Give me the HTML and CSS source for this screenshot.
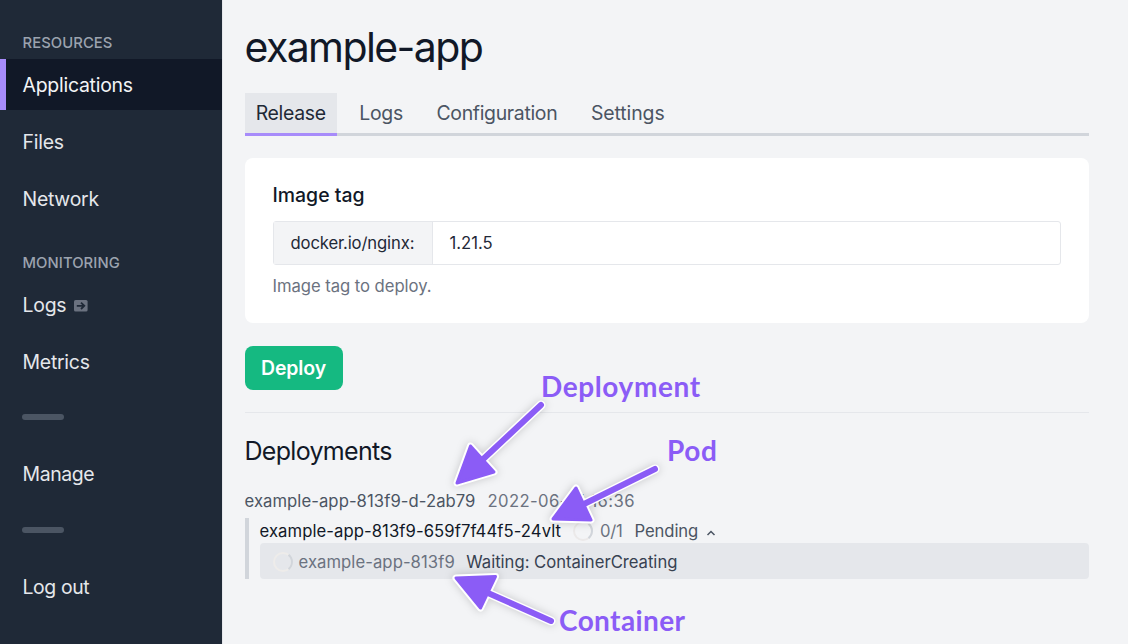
FILE: index.html
```html
<!DOCTYPE html>
<html lang="en">
<head>
<meta charset="utf-8">
<title>example-app</title>
<link rel="stylesheet" href="styles.css">
</head>
<body>
<div class="layout">
  <nav class="sidebar">
    <div class="nav-heading">RESOURCES</div>
    <a class="nav-item active">Applications</a>
    <a class="nav-item">Files</a>
    <a class="nav-item">Network</a>
    <div class="nav-heading second">MONITORING</div>
    <a class="nav-item">Logs
      <svg class="ext" viewBox="0 0 14 12"><rect x="0" y="0" width="13.6" height="11.6" rx="1.6" fill="#6b7280"/><path d="M2.8 5.8H10M7 2.6l3.3 3.2L7 9" fill="none" stroke="#1f2937" stroke-width="1.8"/></svg>
    </a>
    <a class="nav-item">Metrics</a>
    <div class="divider"></div>
    <a class="nav-item low">Manage</a>
    <div class="divider"></div>
    <a class="nav-item low">Log out</a>
  </nav>
  <main class="main">
    <h1 class="title">example-app</h1>
    <div class="tabs">
      <a class="tab selected">Release</a>
      <a class="tab">Logs</a>
      <a class="tab">Configuration</a>
      <a class="tab last">Settings</a>
    </div>
    <section class="card">
      <label class="label">Image tag</label>
      <div class="field">
        <span class="prefix">docker.io/nginx:</span>
        <span class="value">1.21.5</span>
      </div>
      <p class="hint">Image tag to deploy.</p>
    </section>
    <button class="deploy">Deploy</button>
    <h2 class="subtitle">Deployments</h2>
    <div class="deployment"><span class="dep-name">example-app-813f9-d-2ab79</span><span class="date">2022-06-15 16:36</span></div>
    <div class="pods">
      <div class="pod">
        <span class="pod-name">example-app-813f9-659f7f44f5-24vlt</span>
        <svg class="spinner" viewBox="0 0 20 20"><circle class="ring" cx="10" cy="10" r="9"/><path class="arc" d="M15.500 2.900A9 9 0 0 1 15.500 17.100"/></svg>
        <span class="count">0/1</span>
        <span class="pending">Pending</span>
        <svg class="chevron" viewBox="0 0 10 8"><path d="M1.500 6L5 2.500L8.500 6" fill="none" stroke="#4b5563" stroke-width="1.5"/></svg>
      </div>
      <div class="container-row">
        <svg class="spinner" viewBox="0 0 20 20"><circle class="ring" cx="10" cy="10" r="9"/><path class="arc" d="M15.500 2.900A9 9 0 0 1 15.500 17.100"/></svg>
        <span class="container-name">example-app-813f9</span>
        <span class="waiting">Waiting: ContainerCreating</span>
      </div>
    </div>
  </main>
</div>
<svg class="arrows" viewBox="0 0 1128 644">
  <defs>
    <g id="shapes">
      <path d="M541 405L479 463"/><path class="head" d="M457 483L470.500 446L494 472Z"/>
      <path d="M655 469L582 505"/><path class="head" d="M553 519L576 488L591 520Z"/>
      <path d="M551 621L488 593"/><path class="head" d="M456 578L495.500 576.500L480.500 608Z"/>
    </g>
  </defs>
  <use href="#shapes" class="outline"/>
  <use href="#shapes" class="fill"/>
</svg>
<div class="note note-deployment">Deployment</div>
<div class="note note-pod">Pod</div>
<div class="note note-container">Container</div>
</body>
</html>
```
FILE: styles.css
```css
* { box-sizing: border-box; }
body { margin: 0; width: 1128px; height: 644px; overflow: hidden; position: relative; background: #f3f4f6; color: #111827; font-family: Inter, sans-serif; font-size: 16.67px; }
.layout { display: flex; height: 644px; }
.sidebar { width: 222px; flex: none; background: #1f2937; padding-top: 31px; display: flex; flex-direction: column; }
.nav-heading { height: 24px; margin-bottom: 4px; padding-left: 22.500px; line-height: 24px; font-size: 14.8px; font-weight: 500; letter-spacing: 0.08px; color: #9ca3af; }
.nav-heading.second { margin-top: 21px; }
.nav-item { height: 51px; margin-bottom: 6px; padding: 0 0 0 22.500px; display: flex; align-items: center; font-size: 19.44px; color: #e5e7eb; letter-spacing: -0.25px; }
.nav-item.low { padding-bottom: 1px; letter-spacing: -0.4px; }
.nav-item.active { background: #111827; border-left: 6px solid #a78bfa; padding-left: 16.500px; color: #f3f4f6; }
.ext { width: 14px; height: 12px; margin-left: 8px; margin-top: 3px; }
.divider { width: 42px; height: 6px; margin: 21px 0 29px 22px; border-radius: 3px; background: #4b5563; }
.main { flex: 1; border-left: 1px solid #e5e7eb; padding: 17px 39px 0 21.500px; }
.title { margin: 0; height: 60px; line-height: 60px; font-size: 41px; font-weight: 400; letter-spacing: -1.6px; }
.tabs { display: flex; margin-top: 16px; height: 43px; box-shadow: inset 0 -3px #d1d5db; }
.tab { padding: 0 11.200px; margin-right: 11.200px; line-height: 40px; font-size: 19.44px; color: #4b5563; letter-spacing: -0.32px; }
.tab.last { letter-spacing: -0.1px; }
.tab.selected { background: #e5e7eb; color: #1f2937; border-bottom: 3px solid #a78bfa; }
.card { margin-top: 22px; height: 165px; border-radius: 8px; background: #fff; padding: 24px 28px; }
.label { display: block; height: 27px; line-height: 27px; font-size: 19.44px; font-weight: 500; letter-spacing: 0; }
.field { display: flex; height: 44px; margin-top: 12px; line-height: 43px; border: 1.400px solid #e5e7eb; border-radius: 3px; color: #1f2937; letter-spacing: -0.14px; }
.prefix { width: 159px; padding-left: 17px; background: #f3f4f6; border-right: 1.400px solid #e5e7eb; }
.value { padding-left: 17px; letter-spacing: 0; }
.hint { margin: 9px 0 0; line-height: 25px; color: #6b7280; letter-spacing: -0.05px; }
.deploy { display: block; margin-top: 23px; width: 98px; height: 44px; padding: 0; border: 0; border-radius: 8px; background: #15b981; color: #fff; font: 600 19.44px Inter, sans-serif; letter-spacing: -0.1px; }
.subtitle { margin: 22px 0 0; padding-top: 22px; height: 74px; border-top: 1px solid #e5e7eb; line-height: 33px; font-size: 25px; font-weight: 400; letter-spacing: -0.7px; }
.deployment { display: flex; height: 28px; line-height: 30px; color: #4b5563; letter-spacing: 0.06px; }
.date { margin-left: 12px; color: #6b7280; letter-spacing: 0.38px; }
.pods { margin-top: 4px; border-left: 4px solid #d1d5db; padding-left: 11px; height: 61px; }
.pod { display: flex; align-items: center; height: 25px; white-space: nowrap; padding-top: 1px; }
.pod-name { letter-spacing: 0.07px; }
.spinner { flex: none; width: 20px; height: 20px; fill: none; stroke-width: 2px; }
.ring { stroke: #ebe9e9; }
.arc { stroke: #d1d5db; }
.pod .spinner { margin-left: 12px; }
.count { margin-left: 7px; color: #6b7280; letter-spacing: -0.3px; }
.pending { margin-left: 12px; color: #4b5563; letter-spacing: -0.08px; }
.chevron { width: 10px; height: 8px; margin-left: 8px; margin-top: 3px; }
.container-row { display: flex; align-items: center; height: 36px; padding: 1px 0 0 13px; border-radius: 4px; background: #e5e7eb; white-space: nowrap; }
.container-row .ring { stroke: #eeecea; }
.container-name { margin-left: 6px; color: #6b7280; letter-spacing: 0.06px; }
.waiting { margin-left: 11.500px; color: #374151; letter-spacing: -0.02px; }
.arrows { position: absolute; left: 0; top: 0; width: 1128px; height: 644px; filter: drop-shadow(0 0 4px rgba(0,0,0,.18)); }
.arrows path { stroke-linecap: round; stroke-linejoin: round; }
.outline { stroke: #fff; fill: #fff; stroke-width: 9px; --head-stroke: 7px; }
.fill { stroke: #8b5cf6; fill: #8b5cf6; stroke-width: 6px; --head-stroke: 3px; }
.head { stroke-width: var(--head-stroke); }
.note { position: absolute; color: #8b5cf6; font: 700 28px/34px Lato, sans-serif; letter-spacing: 0.6px; }
.note-deployment { left: 541px; top: 369px; }
.note-pod { left: 667px; top: 433px; }
.note-container { left: 559px; top: 603px; letter-spacing: 0.4px; }
```
